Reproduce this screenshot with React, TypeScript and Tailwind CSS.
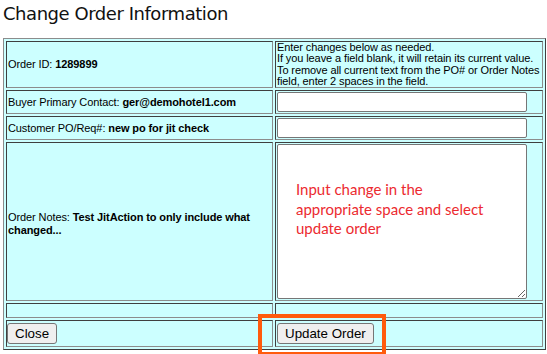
const cell =
  "p-0 align-middle border border-t-[#3f3f3f] border-l-[#3f3f3f] border-b-[#8c8c8c] border-r-[#8c8c8c]";

const fields = [
  { label: "Buyer Primary Contact:", value: "ger@demohotel1.com" },
  { label: "Customer PO/Req#:", value: "new po for jit check" },
];

export default function App() {
  return (
    <div
      className="relative w-[547px] h-[354px] bg-white pl-[3px] text-black overflow-hidden"
      style={{ fontFamily: '"Liberation Sans", Arial, sans-serif' }}
    >
      <h1
        className="text-[18px] leading-[22px] tracking-[-0.45px] pt-[3px] mb-[13px] text-[#111]"
        style={{ fontFamily: '"DejaVu Sans", Verdana, sans-serif' }}
      >
        Change Order Information
      </h1>

      <table className="table-fixed w-[543px] border-separate border-spacing-[2px] bg-[#ccffff] border border-t-[#8c8c8c] border-l-[#8c8c8c] border-b-[#3f3f3f] border-r-[#3f3f3f] text-[11px] tracking-[-0.1px]">
        <tbody>
          <tr>
            <td className={`${cell} w-[267px]`}>
              <div className="h-[45px] px-[1px] flex items-center">
                <span>
                  Order ID: <b>1289899</b>
                </span>
              </div>
            </td>
            <td className={`${cell} w-[268px] align-top`}>
              <div className="h-[45px] px-[1px] leading-[11.25px]">
                Enter changes below as needed.
                <br />
                If you leave a field blank, it will retain its current value.
                <br />
                To remove all current text from the PO# or Order Notes field, enter 2 spaces in the field.
              </div>
            </td>
          </tr>

          {fields.map((f) => (
            <tr key={f.label}>
              <td className={cell}>
                <div className="h-[22px] px-[1px] flex items-center">
                  <span>
                    {f.label} <b>{f.value}</b>
                  </span>
                </div>
              </td>
              <td className={cell}>
                <div className="h-[22px] px-[1px] flex items-center">
                  <input
                    type="text"
                    className="w-[250px] h-[20px] bg-white border border-[#767676] rounded-[2px] outline-none"
                  />
                </div>
              </td>
            </tr>
          ))}

          <tr>
            <td className={cell}>
              <div className="h-[157px] px-[1px] pt-[4px] flex items-center leading-[13px]">
                <span>
                  Order Notes: <b>Test JitAction to only include what</b>
                  <br />
                  <b>changed...</b>
                </span>
              </div>
            </td>
            <td className={cell}>
              <div className="h-[157px] px-[1px] flex items-center">
                <div className="relative">
                  <textarea className="block w-[250px] h-[155px] bg-white border border-[#767676] rounded-[2px] outline-none" />
                  <div
                    className="absolute left-[19px] top-[36px] text-[15px] leading-[19.5px] tracking-normal text-[#ec2a30] pointer-events-none whitespace-nowrap"
                    style={{ fontFamily: 'Lato, "Open Sans", sans-serif' }}
                  >
                    Input change in the
                    <br />
                    appropriate space and select
                    <br />
                    update order
                  </div>
                </div>
              </div>
            </td>
          </tr>

          <tr>
            <td className={cell}>
              <div className="h-[13px]" />
            </td>
            <td className={cell}>
              <div className="h-[13px]" />
            </td>
          </tr>

          <tr>
            <td className={cell}>
              <div className="h-[25px] flex items-center">
                <button className="h-[21px] px-[7px] bg-[#efefef] border border-[#767676] rounded-[3px] text-[13.33px] leading-none tracking-normal">
                  Close
                </button>
              </div>
            </td>
            <td className={cell}>
              <div className="h-[25px] px-[1px] flex items-center">
                <button className="h-[21px] px-[7px] bg-[#efefef] border border-[#767676] rounded-[3px] text-[13.33px] leading-none tracking-normal">
                  Update Order
                </button>
              </div>
            </td>
          </tr>
        </tbody>
      </table>

      <div className="absolute left-[258px] top-[314px] w-[128px] h-[42px] border-4 border-[#ff5b0d] pointer-events-none" />
    </div>
  );
}
